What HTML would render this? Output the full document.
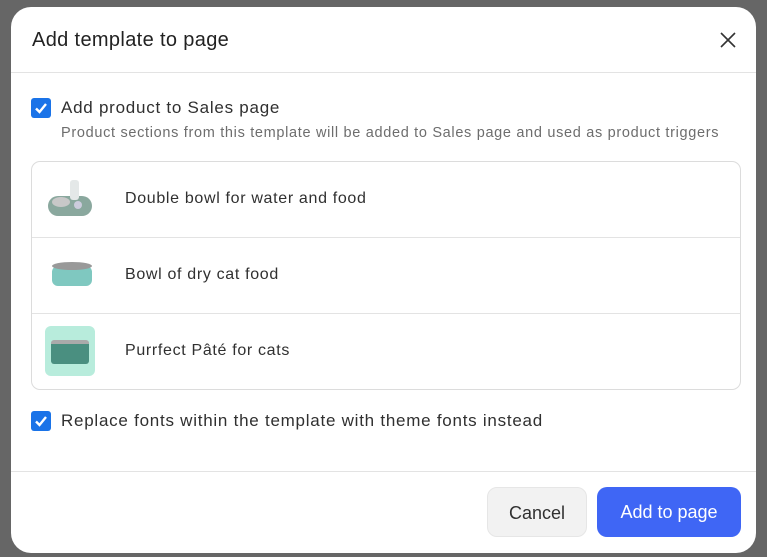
<!DOCTYPE html>
<html><head><style>
*{box-sizing:border-box;margin:0;padding:0}
body{width:767px;height:557px;background:#666;font-family:"Liberation Sans",sans-serif;position:relative;overflow:hidden;color:#303030}
.m{position:absolute;left:11px;top:7px;width:745px;height:546px;background:#fff;border-radius:20px}
.t{position:absolute;left:21px;top:22px;font-size:20px;color:#222;letter-spacing:0.35px}
.x{position:absolute;left:708px;top:24px}
.hr{position:absolute;left:0;width:745px;height:1px;background:#e3e3e3}
.cb{position:absolute;width:20px;height:20px;background:#1a73e8;border-radius:3px}
.lbl{position:absolute;font-size:17px;color:#303030;letter-spacing:0.75px}
.sub{position:absolute;left:50px;top:118px;font-size:14.5px;color:#6d6d6d;letter-spacing:0.68px}
.list{position:absolute;left:20px;top:154px;width:710px;height:229px;border:1px solid #dcdcdc;border-radius:9px}
.row{position:absolute;left:0;width:708px;height:76px;border-bottom:1px solid #e3e3e3}
.row span{position:absolute;left:93px;top:28px;font-size:16px;color:#303030;letter-spacing:0.67px}
.btn{position:absolute;top:480px;height:50px;border-radius:10px;font-size:18px;text-align:center;line-height:50px}
</style></head><body>
<div class="m">
<div class="t">Add template to page</div>
<svg class="x" width="18" height="18" viewBox="0 0 18 18"><path d="M2 2L16 16M16 2L2 16" stroke="#333" stroke-width="1.6"/></svg>
<div class="hr" style="top:65px"></div>
<div class="cb" style="left:20px;top:91px"><svg width="20" height="20"><path d="M5 10.5l3.5 3.5L15 6" stroke="#fff" stroke-width="2.4" fill="none"/></svg></div>
<div class="lbl" style="left:50px;top:91px">Add product to Sales page</div>
<div class="sub">Product sections from this template will be added to Sales page and used as product triggers</div>
<div class="list">
<div class="row" style="top:0"><svg style="position:absolute;left:14px;top:16px" width="48" height="42"><rect x="2" y="18" width="44" height="20" rx="10" fill="#8aa89e"/><ellipse cx="15" cy="24" rx="9" ry="5" fill="#c8c8c8"/><rect x="24" y="2" width="9" height="20" rx="3" fill="#e4e8e8"/><circle cx="32" cy="27" r="4" fill="#ccd"/></svg><span>Double bowl for water and food</span></div>
<div class="row" style="top:76px"><svg style="position:absolute;left:18px;top:22px" width="44" height="30"><rect x="2" y="6" width="40" height="20" rx="6" fill="#7fc8c0"/><ellipse cx="22" cy="6" rx="20" ry="4" fill="#999"/></svg><span>Bowl of dry cat food</span></div>
<div class="row" style="top:152px;border-bottom:none"><div style="position:absolute;left:13px;top:12px;width:50px;height:50px;background:#b8ecdc;border-radius:6px"><div style="position:absolute;left:6px;top:14px;width:38px;height:24px;background:#4a8f80;border-radius:3px;border-top:4px solid #aaa"></div></div><span>Purrfect Pâté for cats</span></div>
</div>
<div class="cb" style="left:20px;top:404px"><svg width="20" height="20"><path d="M5 10.5l3.5 3.5L15 6" stroke="#fff" stroke-width="2.4" fill="none"/></svg></div>
<div class="lbl" style="left:50px;top:404px">Replace fonts within the template with theme fonts instead</div>
<div class="hr" style="top:464px"></div>
<div class="btn" style="left:476px;width:100px;background:#f2f2f2;border:1px solid #e6e6e6;color:#303030">Cancel</div>
<div class="btn" style="left:586px;width:144px;background:#3f66f5;color:#fff">Add to page</div>
</div>
</body></html>
